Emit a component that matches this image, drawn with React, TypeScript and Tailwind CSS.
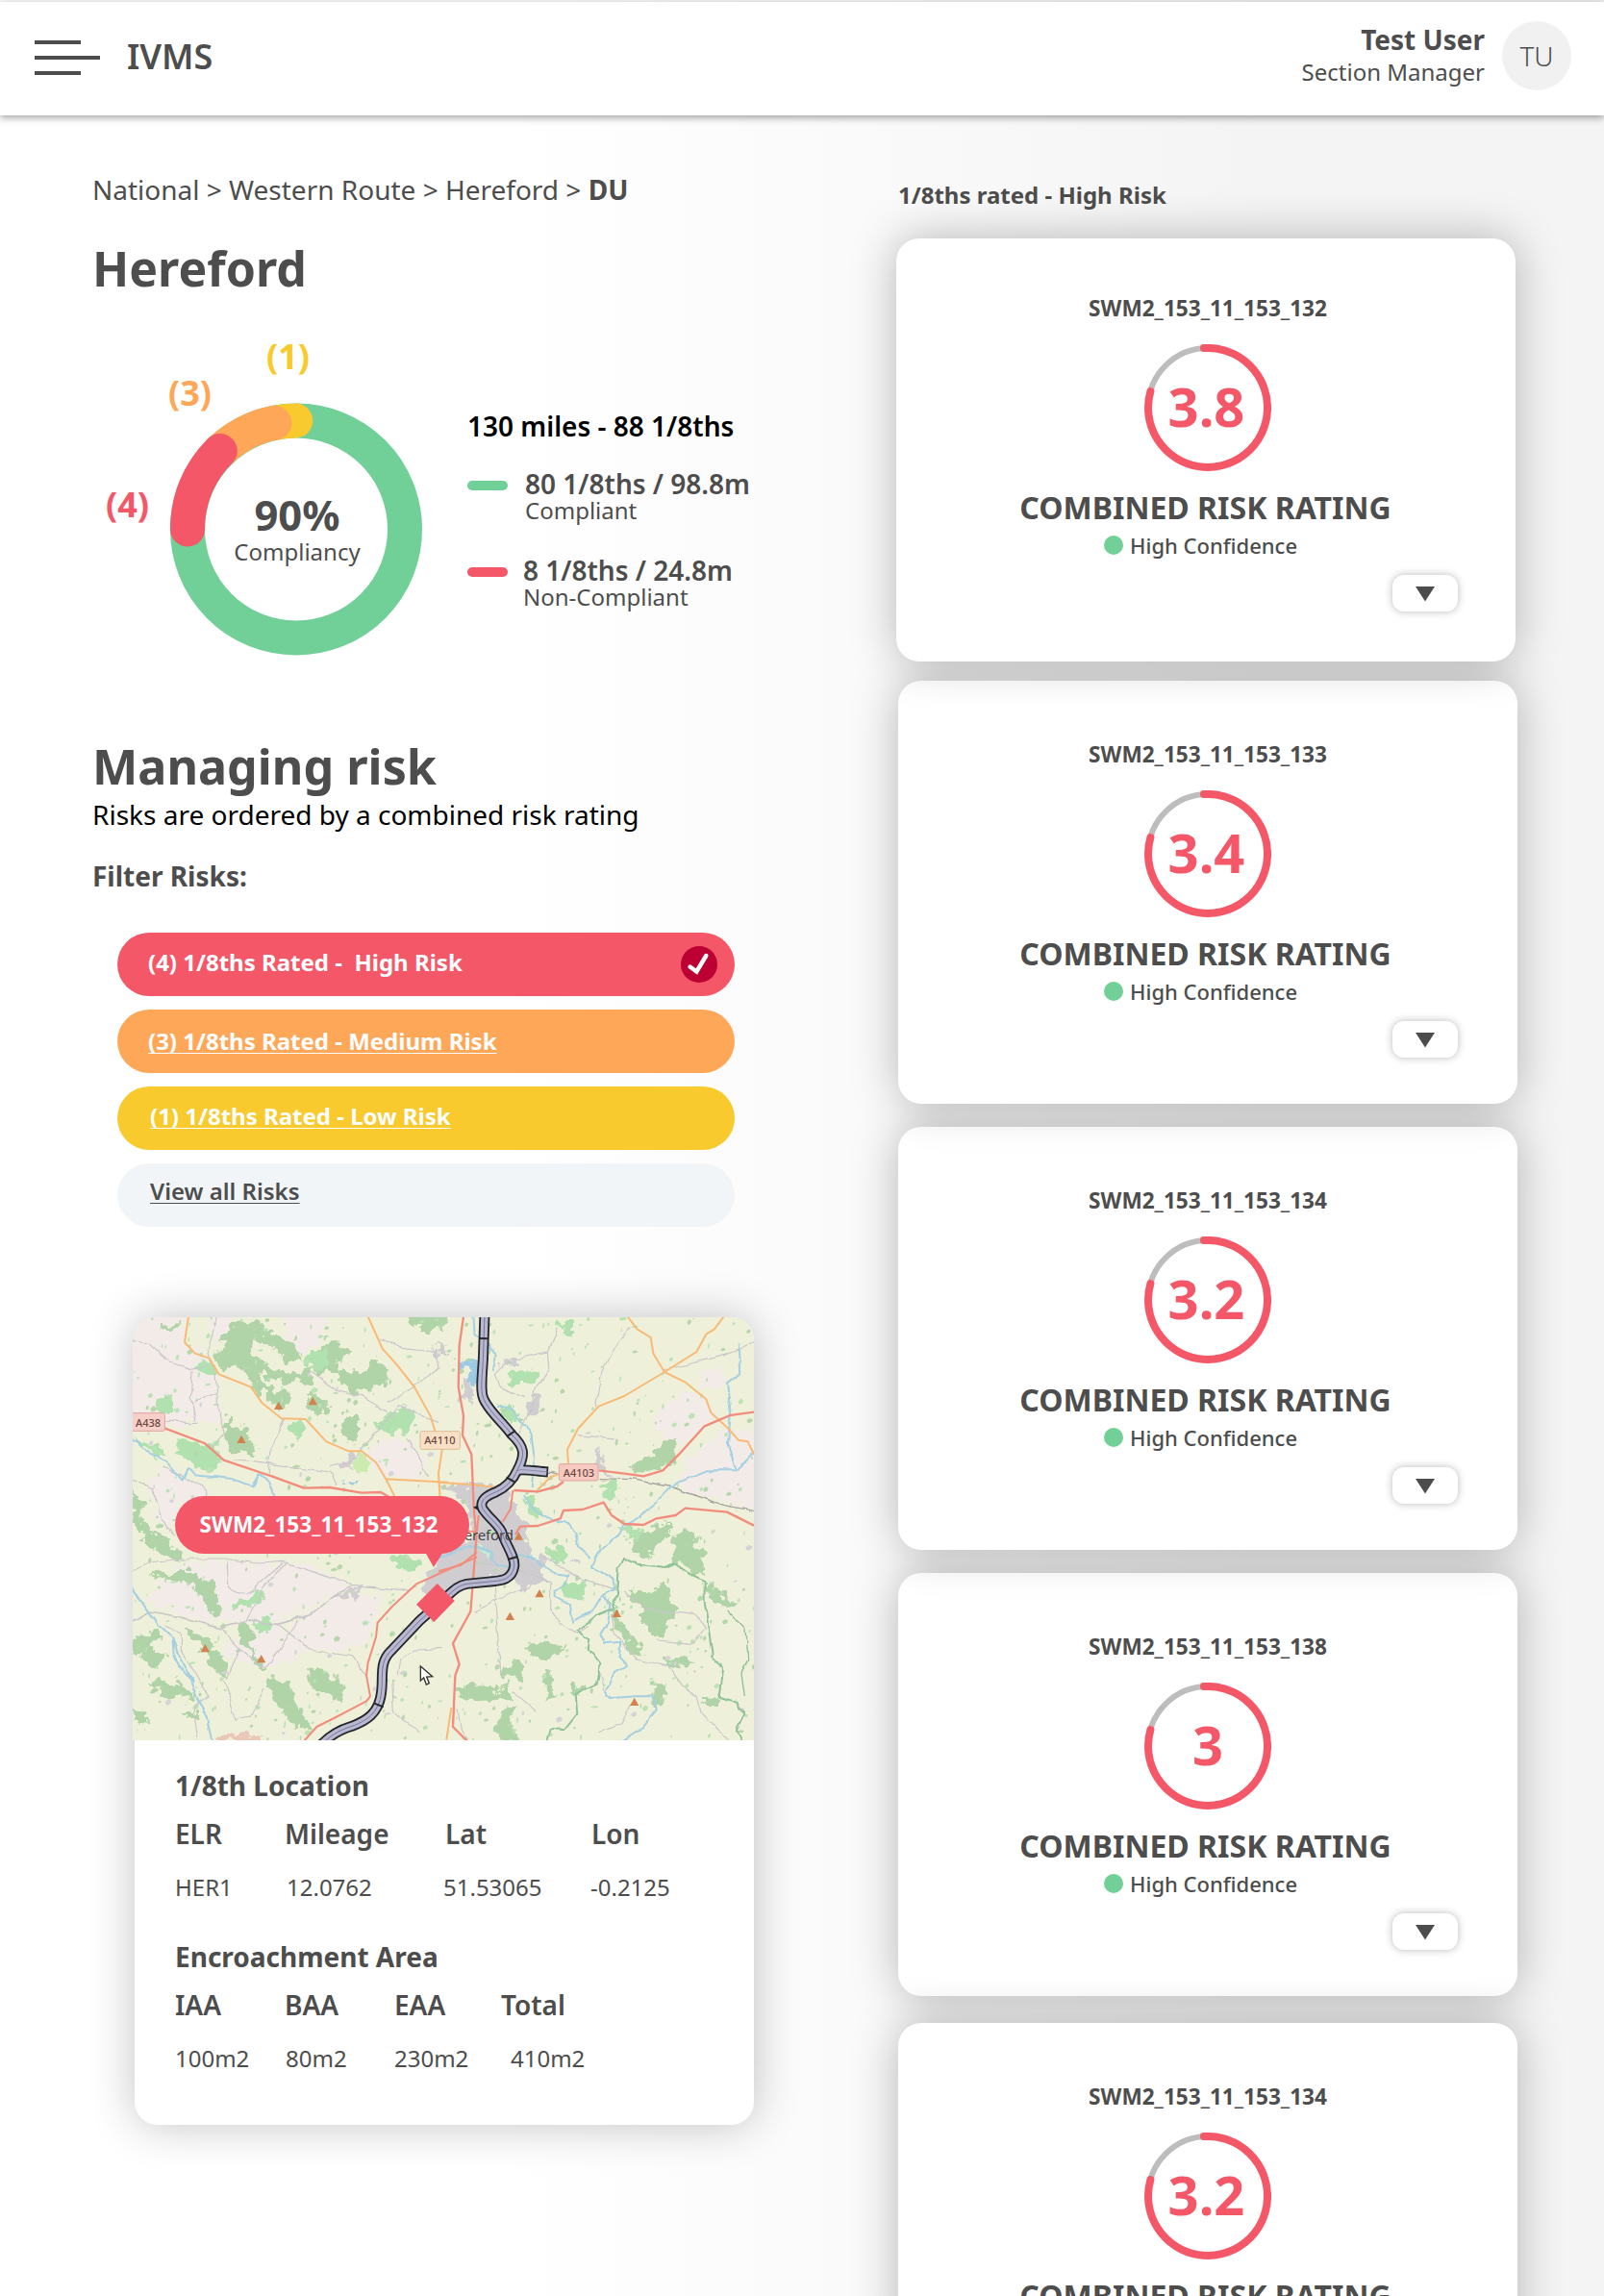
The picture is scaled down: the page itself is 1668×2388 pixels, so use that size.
import React from "react";

const RED = "#f45767";
const GREEN = "#71d097";
const ORANGE = "#ffa759";
const YELLOW = "#f8ca2e";

function Header() {
  return (
    <header className="relative z-10 mt-0.5 flex h-[118px] shrink-0 items-start bg-white shadow-[0_2px_8px_rgba(0,0,0,0.4)]">
      <div className="mt-10 ml-9 flex flex-col gap-3">
        <span className="h-1 w-12 bg-[#4d4d4d]" />
        <span className="h-1 w-[68px] bg-[#4d4d4d]" />
        <span className="h-1 w-12 bg-[#4d4d4d]" />
      </div>
      <h1 className="mt-[33px] ml-7 text-[36px] leading-[48px] font-semibold">IVMS</h1>
      <div className="ml-auto pt-[19px] text-right">
        <p className="text-[28px] leading-[40px] font-bold">Test User</p>
        <p className="-mt-[3px] text-[24px] leading-[34px]">Section Manager</p>
      </div>
      <div className="mt-5 mr-[34px] ml-[18px] flex size-[72px] items-center justify-center rounded-full bg-[#f1f1f1] text-[28px] font-light">
        TU
      </div>
    </header>
  );
}

function Donut() {
  return (
    <svg width="350" height="350" viewBox="0 0 350 350" className="shrink-0 overflow-visible">
      <g fill="none" strokeWidth="36" strokeLinecap="round">
        <circle cx="212" cy="210.5" r="113" stroke={GREEN} />
        <path d="M189.5 99.8 A113 113 0 0 1 211.3 97.5" stroke={YELLOW} />
        <path d="M132.8 129 A113 113 0 0 1 189.5 99.8" stroke={ORANGE} />
        <path d="M99 210.5 A113 113 0 0 1 132.8 129" stroke={RED} />
      </g>
      <g textAnchor="middle" fontWeight="700" fontSize="36">
        <text x="203.500" y="43.7" fill={YELLOW}>(1)</text>
        <text x="101.500" y="82" fill={ORANGE}>(3)</text>
        <text x="36.5" y="198" fill={RED}>(4)</text>
        <text x="213" y="212" fontSize="43.5" fill="#4d4d4d">90%</text>
        <text x="213" y="243" fontSize="24" fontWeight="400" fill="#4d4d4d">Compliancy</text>
      </g>
    </svg>
  );
}

function Legend() {
  return (
    <div className="ml-10 pt-[83px]">
      <p className="text-[28px] leading-[40px] font-semibold whitespace-nowrap text-black">130 miles - 88 1/8ths</p>
      <div className="mt-[25px] flex gap-[18px]">
        <span className="mt-3 h-2.5 w-[42px] rounded-full bg-[#71d097]" />
        <div>
          <p className="text-[28px] leading-[30px] font-semibold">80 1/8ths / 98.8m</p>
          <p className="text-[24px] leading-[26px]">Compliant</p>
        </div>
      </div>
      <div className="mt-[34px] flex gap-4">
        <span className="mt-3 h-2.5 w-[42px] rounded-full bg-[#f45767]" />
        <div>
          <p className="text-[28px] leading-[30px] font-semibold">8 1/8ths / 24.8m</p>
          <p className="text-[24px] leading-[26px]">Non-Compliant</p>
        </div>
      </div>
    </div>
  );
}

function Filters() {
  return (
    <div className="mt-[39px] ml-[26px] flex w-[642px] flex-col gap-3.5 text-[24px] leading-[34px] font-bold text-white">
      <div className="flex h-[66px] items-start justify-between rounded-full bg-[#f45767] pt-3.5 pr-[18px] pl-8">
        <span className="whitespace-pre">(4) 1/8ths Rated -  High Risk</span>
        <svg width="38" height="38" viewBox="0 0 38 38">
          <circle cx="19" cy="19" r="19" fill="#bd0034" />
          <path d="M9.500 21.500 L16.400 26.500 L26.300 10" fill="none" stroke="#fff" strokeWidth="4.4" strokeLinecap="round" />
        </svg>
      </div>
      <a className="flex h-[66px] items-start rounded-full bg-[#ffa759] pt-4 pl-8 underline decoration-1 underline-offset-[3px] [text-decoration-skip-ink:none]">
        (3) 1/8ths Rated - Medium Risk
      </a>
      <a className="flex h-[66px] items-start rounded-full bg-[#f8ca2e] pt-3.5 pl-[34px] underline decoration-1 underline-offset-[3px] [text-decoration-skip-ink:none]">
        (1) 1/8ths Rated - Low Risk
      </a>
      <a className="flex h-[66px] items-start rounded-full bg-[#f2f5f8] pt-3 pl-[34px] font-semibold text-[#4d4d4d] underline decoration-1 underline-offset-[3px] [text-decoration-skip-ink:none]">
        View all Risks
      </a>
    </div>
  );
}

/* Small scattered copses, generated from a fixed seed. */
function copses() {
  let s = 77;
  const rnd = () => {
    s = (s * 16807) % 2147483647;
    return s / 2147483647;
  };
  return Array.from({ length: 620 }, (_, i) => {
    const x = rnd() * 646;
    const y = rnd() * 440;
    const a = 0.8 + rnd() * rnd() * 4;
    const b = 0.8 + rnd() * 2.4;
    const fill = i % 11 === 0 ? "#d6d2d6" : i % 2 ? "#b6d7ac" : "#bbe3b5";
    return (
      <path
        key={i}
        fill={fill}
        d={`M${x} ${y} l${a} ${-b} l${a} ${b * 0.6} l${-a * 0.3} ${b} l${-a * 1.2} ${b * 0.5} z`}
      />
    );
  });
}

const RAIL =
  "M144 0 L140 120 C139 180 128 235 140 265 C158 308 200 338 228 378 C268 415 272 440 247 487 C232 522 212 542 178 558 C140 572 128 590 138 610 C162 645 193 662 200 690 C212 725 240 762 236 790 C230 828 200 834 170 836 L88 844 C58 850 46 866 10 898 L-60 960 L-150 1055 C-185 1090 -172 1130 -178 1180 C-185 1250 -228 1272 -270 1288 C-310 1300 -345 1322 -370 1350";
const BRANCH = "M244 490 C265 485 300 492 342 495";

function Peak({ x, y }: { x: number; y: number }) {
  return <path d={`M${x} ${y - 13} L${x + 14} ${y + 12} H${x - 14} Z`} fill="#d3824e" />;
}

function Map() {
  return (
    <svg width="646" height="440" viewBox="0 0 646 440" className="-ml-0.5 block rounded-t-3xl">
      <defs>
        <filter id="ragged" x="-5%" y="-5%" width="110%" height="110%">
          <feTurbulence type="fractalNoise" baseFrequency="0.09" numOctaves="3" seed="4" result="n" />
          <feDisplacementMap in="SourceGraphic" in2="n" scale="20" xChannelSelector="R" yChannelSelector="G" />
        </filter>
        <filter id="wobble" x="-5%" y="-5%" width="110%" height="110%">
          <feTurbulence type="fractalNoise" baseFrequency="0.06" numOctaves="2" seed="9" result="n" />
          <feDisplacementMap in="SourceGraphic" in2="n" scale="7" xChannelSelector="R" yChannelSelector="G" />
        </filter>
      </defs>
      <rect width="646" height="440" fill="#eff0d9" />

      {/* land cover */}
      <g filter="url(#ragged)">
        <g transform="translate(-2 -4) scale(0.33333)">
          <g fill="#f2ebe7">
            <path d="M-30 -30 H170 L168 90 L240 130 L270 190 L285 340 L200 340 L110 360 L-30 310Z" />
            <path d="M660 480 L780 400 L870 390 L930 470 L900 520 L800 510 L720 440Z" />
            <path d="M300 770 L520 780 L680 850 L600 900 L460 960 L300 970 L150 940 L40 890 L170 780Z" />
            <path d="M480 980 L640 890 L790 870 L740 1020 L640 1060 L520 1040Z" />
            <path d="M90 480 L230 540 L240 570 L140 600 L160 680 L90 660 L60 540Z" />
            <path d="M260 1060 L400 980 L440 970 L560 1060 L430 1110 L320 1080Z" />
            <path d="M240 -20 H350 L300 60 L260 110Z M460 -20 H620 L590 80 L540 130 L500 90Z" />
          </g>
          <g fill="#b0d4a8">
            <path d="M290 60 L330 30 L400 25 L450 70 L520 90 L530 150 L500 160 L440 110 L390 80 L380 120 L430 170 L480 180 L560 180 L570 230 L510 215 L450 210 L400 180 L420 230 L480 240 L495 270 L470 300 L430 270 L390 230 L350 170 L300 170 L265 150Z" />
            <path d="M590 90 L650 95 L690 120 L680 140 L640 140 L650 180 L740 180 L760 145 L800 155 L800 210 L770 235 L700 245 L670 240 L665 205 L620 180 L570 180 L560 150Z" />
            <path d="M300 335 L345 355 L375 390 L400 440 L360 445 L310 430 L300 380Z" />
            <path d="M655 315 L700 315 L715 360 L700 410 L670 395 L650 350Z" />
            <path d="M555 250 L610 270 L615 310 L585 320 L555 290Z" />
            <path d="M5 560 L30 590 L45 660 L90 695 L160 750 L160 765 L90 750 L35 715 L45 690 L8 650Z" />
            <path d="M180 810 L220 810 L265 860 L285 940 L255 960 L225 890 L190 840 L80 835 L60 810Z" />
            <path d="M5 1010 L60 1000 L90 1010 L60 1040 L100 1060 L100 1090 L60 1110 L40 1080 L5 1050Z" />
            <path d="M320 975 L365 970 L385 1010 L370 1030 L425 1110 L400 1110 L360 1040Z" />
            <path d="M425 1120 L500 1170 L530 1230 L555 1295 L515 1290 L470 1240 L440 1180Z" />
            <path d="M550 1110 L620 1120 L660 1180 L650 1210 L590 1190 L550 1150Z" />
            <path d="M50 1150 L150 1150 L210 1190 L200 1210 L130 1200 L60 1180Z" />
            <path d="M160 990 L200 990 L240 1010 L290 1090 L300 1130 L265 1110 L235 1060 L195 1020Z" />
            <path d="M80 30 L160 35 L150 50 L90 50Z M860 0 L990 0 L990 40 L930 55 L860 30Z" />
            <path d="M10 1220 L50 1250 L40 1290 L8 1270Z M160 1250 L210 1240 L220 1260 L170 1270Z" />
          </g>
          <g fill="#b2e1b0">
            <path d="M150 390 L260 410 L280 460 L250 500 L190 480 L145 430Z" />
            <path d="M85 260 L110 250 L125 290 L130 320 L90 310 L80 285Z" />
            <path d="M205 160 L250 145 L265 190 L230 200Z M500 335 L540 335 L530 390 L500 370Z" />
            <path d="M800 310 L880 300 L890 340 L820 380 L770 360 L770 340Z M820 750 L900 760 L920 790 L850 800 L820 780Z" />
            <path d="M8 390 L60 400 L110 440 L80 450 L20 410Z M540 130 L610 110 L620 160 L560 180Z" />
            <path d="M310 890 L380 880 L410 860 L420 880 L380 920 L310 905Z M380 950 L440 960 L440 990 L400 1010 L385 985Z" />
          </g>
          <path d="M690 460 L720 435 L750 465 L740 500 L690 500Z" fill="#cdebb0" />
          <path d="M655 470 L690 440 L700 460 L665 485Z M670 860 L720 860 L700 900 L660 880Z M930 800 L990 760 V880 L920 860Z M935 110 L990 100 V130Z" fill="#d0cdd0" />
          <path d="M670 520 q20 -12 45 4 q-20 16 -45 -4Z" fill="#9dcae0" />
          <path d="M265 1335 L300 1310 L420 1320 L380 1335Z" fill="#eac7b8" />
        </g>
        <g transform="translate(318 -4) scale(0.33333)">
          <g fill="#f2ebe7">
            <path d="M700 290 L770 245 L830 270 L870 320 L780 400 L720 410 L665 340Z" />
            <path d="M790 440 L900 350 L1020 390 V620 L900 590 L740 540Z" />
            <path d="M810 180 L880 165 L900 210 L840 240Z" />
          </g>
          <g fill="#b0d4a8">
            <path d="M590 480 L680 440 L700 395 L740 410 L735 460 L690 490 L600 490Z" />
            <path d="M730 700 L770 670 L810 710 L830 750 L830 820 L780 800 L730 770Z" />
            <path d="M640 860 L720 850 L740 900 L720 960 L690 1010 L650 980 L620 900 L590 880Z" />
            <path d="M545 880 L560 950 L600 990 L640 1060 L600 1060 L565 1000 L540 950Z" />
            <path d="M610 700 L720 650 L720 690 L640 760 L600 750Z" />
            <path d="M60 1170 L120 1155 L190 1180 L220 1150 L230 1200 L150 1205 L65 1200Z" />
            <path d="M210 1090 L255 1080 L258 1140 L200 1130Z M335 1120 L350 1110 L370 1200 L335 1200Z" />
            <path d="M180 1290 L215 1220 L250 1220 L220 1260 L250 1330 H190Z M270 1040 L330 1035 L400 1040 L350 1080 L275 1060Z" />
            <path d="M830 830 L850 850 L925 900 L910 920 L850 890Z M670 1165 L710 1165 L695 1230 L670 1220Z M815 1200 L880 1205 L880 1225 L820 1220Z" />
            <path d="M700 1070 L800 1080 L770 1110 L710 1090Z M410 1150 L460 1160 L440 1190 L415 1180Z" />
          </g>
          <g fill="#b2e1b0">
            <path d="M225 190 L290 175 L310 200 L270 225 L220 225Z" />
            <path d="M510 525 L560 530 L560 580 L515 580Z M390 840 L460 840 L450 895 L400 880Z M330 730 L395 730 L400 780 L340 770Z" />
            <path d="M380 30 L420 30 L420 65 L385 60Z M580 660 L640 680 L640 710 L580 700Z M260 570 L300 580 L340 640 L300 640Z M180 285 L230 290 L250 330 L210 330Z" />
          </g>
          <g fill="#d0cdd0">
            <path d="M0 540 L110 530 L210 545 L235 600 L270 650 L270 700 L320 770 L340 830 L270 860 L220 820 L120 850 L0 870 V740 L110 700 L90 600Z" />
            <path d="M290 250 L320 270 L320 310 L280 320 L270 290Z M190 145 L240 135 L240 155 L200 165Z M490 440 L510 430 L515 480 L545 510 L480 490Z M80 190 L110 200 L100 290 L75 230Z M420 770 L440 770 L440 790 L420 790Z" />
          </g>
          <path d="M70 150 L115 140 L130 200 L110 240 L100 170 L75 170Z" fill="#9dcae0" />
          <path d="M120 720 L160 725 L160 760 L130 750Z M90 640 L120 640 L110 660Z" fill="#c3efcf" />
        </g>
      </g>
      <g>{copses()}</g>

      {/* lanes, rivers and minor roads */}
      <g filter="url(#wobble)" fill="none" strokeLinejoin="round">
        <g transform="translate(-2 -4) scale(0.33333)">
          <g stroke="#c9c6ca" strokeWidth="3.5">
            <path d="M5 85 L60 95 L120 150 L190 175 L240 165 M275 0 L240 110 L265 200 L275 320 L295 370 L250 420" />
            <path d="M195 180 L190 260 L205 335 M200 275 L270 245 M110 340 L210 340" />
            <path d="M620 480 L690 460 L750 390 L830 290 L960 340 M560 180 L640 240 L720 260 L800 310 M800 280 L880 230 L960 170 L950 120 L850 110 L780 75" />
            <path d="M430 500 L435 420 L480 330 M320 455 L460 470 L620 495 L640 540 M860 390 L900 450 L930 510" />
            <path d="M5 520 L60 540 L85 600 L90 640 L140 690 M100 480 L230 540 L235 570" />
            <path d="M5 800 L50 780 L200 765 L290 765 L400 780 L470 775 L600 815 L690 850 L840 865 L890 855" />
            <path d="M5 960 L60 930 L140 945 L280 980 L370 960 L460 970 L560 940 L640 880 L690 850" strokeWidth="5" />
            <path d="M280 980 L340 1045 L420 1110 L460 1050 L520 960 M300 770 L305 855 L360 880 L470 780 M360 960 L410 860 L480 780" />
            <path d="M460 970 L560 1050 L690 1070 L730 1130 M110 975 L160 1000 L160 1060 L200 1120 L240 1190 L195 1230 L210 1330" />
            <path d="M300 1140 L340 1050 M290 1140 L330 1270 L380 1250 L420 1170 M830 1130 L840 1080 L900 1050 L970 1045 M815 1140 L820 1240 L900 1310" />
          </g>
          <g stroke="#a5d0e2" strokeWidth="6">
            <path d="M5 390 L40 425 L110 460 L160 520 L178 480 L200 505 L310 515 L380 538 L400 500 L430 530 L445 570" />
            <path d="M-10 840 L50 920 L85 970 L130 1010 L135 1080 L185 1140 L210 1210 L235 1250 L255 1345" />
            <path d="M130 1010 L145 1060 L195 1150" />
          </g>
        </g>
        <g transform="translate(318 -4) scale(0.33333)">
          <g stroke="#c9c6ca" strokeWidth="3.5">
            <path d="M370 50 L340 120 L220 145 L175 190 L190 230 L270 260 M340 120 L345 180 L300 230 L290 300 L250 380" />
            <path d="M600 40 L560 90 L510 180 L490 290 M984 90 L900 130 L750 165 L700 180 M440 380 L560 395" />
            <path d="M110 780 L260 800 L350 840 L350 920 L380 970 L430 1000 L470 970 M320 750 L440 830 L550 860 M290 850 L200 890 L110 930" />
            <path d="M175 850 L180 950 L195 1130 M540 940 L550 1000 L620 1080 L720 1105 L760 1160 L805 1190 L815 1240 L900 1330 M500 1110 L515 1180" />
            <path d="M580 870 L640 920 L800 940 L830 980 L790 1030 L680 1020 M600 1220 L570 1280 L500 1310 M60 1230 L70 1300 L90 1330 M230 1180 L300 1240" />
          </g>
          <path d="M340 495 L370 500 M500 515 L600 518 L720 540 L890 598 L1000 620" stroke="#a3a3a0" strokeWidth="4" />
          <g stroke="#a5d0e2" strokeWidth="6">
            <path d="M105 0 L110 60 L150 90 L180 130 L170 180 M180 290 L225 300 L250 330 L275 350 L290 390 L300 450 L290 540" />
            <path d="M935 95 L940 190 L900 220 L910 300 L900 400 L930 490 L840 490 L740 530 L680 590 L630 630 L575 665 L530 720 L490 760 L480 790 L545 830 L550 860 L510 880 L480 930 L420 965 L410 910 L365 885 L365 865 L400 840 L410 815" />
            <path d="M930 490 L990 430 M270 570 L290 605 L340 640 L400 650 L430 690 L440 730 L475 760 M160 760 L185 790 L240 800 M245 750 L290 760 L370 815 L410 820" />
            <path d="M515 880 L535 910 L525 970 L505 1000 L520 1030 L565 1025 L560 1070 L590 1100 L550 1120 L520 1180 L540 1200 L620 1195 L670 1195 L680 1240 L640 1290 L560 1340" />
            <path d="M0 765 L60 740 L120 725 L160 740 L165 770" strokeWidth="8" />
          </g>
          <g stroke="#8fc297" strokeWidth="6">
            <path d="M340 1340 L350 1295 L390 1300 L430 1250 L425 1190 L490 1160 L505 1095 L470 1050 L475 1020 L430 990 L490 945 L540 925 L555 880 L560 790 L575 765 L620 785 L710 795 L740 780 L790 815 L830 835 L830 900 L845 1000 L855 1070 L885 1105 L875 1200 L930 1215 L955 1250 L930 1300 L950 1340" />
            <path d="M905 930 L960 990 L965 1080 L945 1120 L955 1200" strokeWidth="4" />
          </g>
        </g>
      </g>

      {/* main roads on the west side */}
      <g transform="translate(-2 -4) scale(0.33333)">
        <g fill="none" stroke="#f9ba76" strokeWidth="6" strokeLinejoin="round">
          <path d="M180 10 L168 90 L200 125 L245 140 L275 190 L375 230 L410 280 L470 328 L545 330 L610 400 L680 430 L720 430 L765 465 L795 515 L825 575" />
          <path d="M740 10 L785 110 L830 160 L885 230 L935 320 L950 370 M972 420 L960 500 L965 580 M795 517 L990 527" />
        </g>
        <g fill="none" stroke="#f28c7c" strokeWidth="7" strokeLinejoin="round">
          <path d="M105 358 L230 405 L290 458 L400 495 L440 508 L540 545 L620 543 L720 560 L780 558 L810 575" />
          <path d="M1080 760 L1000 795 L890 845 L815 915 L770 965 L765 1010 L740 1090 L735 1130 L747 1195 L735 1210 L640 1260 L580 1290 L540 1335" strokeWidth="6" />
        </g>
        <Peak x={461} y={288} />
        <Peak x={568} y={274} />
        <Peak x={345} y={393} />
        <Peak x={232} y={1045} />
        <Peak x={407} y={1078} />
      </g>

      {/* main roads on the east side, railway, labels and marker */}
      <g transform="translate(318 -4) scale(0.33333)">
        <g fill="none" stroke="#f9ba76" strokeWidth="6" strokeLinejoin="round">
          <path d="M590 10 L620 50 L662 75 L670 125 L705 183 L770 215 L835 268 L850 310 L905 360 L935 395 L965 400 L984 440" />
          <path d="M890 10 L860 50 L835 65 L805 120 L705 183 L580 258 L500 290 L435 360 L402 425 L405 470 M0 527 L110 535 L200 545 M310 550 L350 510 L380 500" />
          <path d="M40 1230 L25 1330" />
        </g>
        <g fill="none" stroke="#f28c7c" strokeWidth="7" strokeLinejoin="round">
          <path d="M78 10 L65 100 L62 230 L78 320 L75 380 L103 440 L110 600 L118 700 L105 870 L100 930 L45 1030 L65 1095 L52 1130 L45 1290 L90 1335" />
          <path d="M500 490 L580 500 L640 508 L700 490 L750 440 L830 352 L870 335 L910 318 L984 308" />
          <path d="M235 552 L310 556 L370 540 L390 525 M240 690 L255 665 L310 663 L380 640 L390 615 L450 612 L515 590 L540 630 L580 657 L640 660 L680 640 L740 630 L770 608 L900 620 L984 662" />
          <path d="M232 552 L225 610 L200 650 M0 805 L70 785 L120 745 M70 680 L120 680 L125 630" strokeWidth="6" />
        </g>
        <g fill="none">
          <path d={RAIL} stroke="#26272b" strokeWidth="33" />
          <path d={BRANCH} stroke="#26272b" strokeWidth="33" />
          <path d="M108 605 L140 590 L140 625Z" fill="#26272b" />
          <path d={RAIL} stroke="#b9b8d2" strokeWidth="22" />
          <path d="M244 490 C265 485 300 492 337 494.500" stroke="#b9b8d2" strokeWidth="22" />
          <path d={RAIL} stroke="#77778f" strokeWidth="3" />
          <path d={BRANCH} stroke="#77778f" strokeWidth="2" />
          <path d="M129 78 L156 79 M216 382 L240 366 M212 512 L238 526 M216 768 L244 760 M-200 1217 L-172 1228" stroke="#26272b" strokeWidth="6" />
        </g>
        <text x="80" y="709" fontSize="45" textLength="154" fill="#44444a">ereford</text>
        <Peak x={250} y={695} />
        <Peak x={315} y={874} />
        <Peak x={223} y={945} />
        <Peak x={556} y={936} />
        <Peak x={611} y={1212} />

        <rect x="-960" y="311" width="106" height="56" rx="5" fill="#f6d0c8" stroke="#e0a59b" strokeWidth="3" />
        <rect x="-57" y="368" width="124" height="56" rx="5" fill="#f8e0c6" stroke="#dcbd97" strokeWidth="3" />
        <rect x="376" y="470" width="122" height="52" rx="5" fill="#f6c9c1" stroke="#e0a59b" strokeWidth="3" />
        <g fontSize="33" fill="#6a4640" textAnchor="middle">
          <text x="-906" y="353" fontWeight="500">A438</text>
          <text x="4" y="409" fontWeight="500">A4110</text>
          <text x="438" y="511" fontWeight="500">A4103</text>
        </g>
        <path d="M-56 1101 V1146 L-46 1137 L-38 1158 L-29 1154 L-37 1134 L-19 1133 Z" fill="#fff" stroke="#333" strokeWidth="4" />

        <path d="M-4 843 L50 897 L-14 963 L-69 908 Z" fill={RED} />
      </g>

      <rect x="44" y="186" width="306" height="60" rx="30" fill={RED} />
      <path d="M304 244 L313 260 L323 244 Z" fill={RED} />
      <text x="193.500" y="224" fontSize="22.6" fontWeight="700" fill="#fff" textAnchor="middle">SWM2_153_11_153_132</text>
    </svg>
  );
}

function LocationCard() {
  return (
    <section className="mt-[94px] ml-11 h-[840px] w-[644px] rounded-3xl bg-white shadow-[0_0_48px_rgba(0,0,0,0.24)]">
      <Map />
      <div className="pt-[27px] pl-[42px] text-[28px] leading-[40px] font-semibold">
        <h3 className="font-bold">1/8th Location</h3>
        <div className="mt-2.5 grid grid-cols-[114px_167px_152px_auto]">
          <span>ELR</span>
          <span>Mileage</span>
          <span>Lat</span>
          <span>Lon</span>
        </div>
        <div className="mt-[19px] grid grid-cols-[116px_163px_153px_auto] text-[24px] leading-[34px] font-normal">
          <span>HER1</span>
          <span>12.0762</span>
          <span>51.53065</span>
          <span>-0.2125</span>
        </div>
        <h3 className="mt-[35px] font-bold">Encroachment Area</h3>
        <div className="mt-2.5 grid grid-cols-[114px_114px_111px_auto]">
          <span>IAA</span>
          <span>BAA</span>
          <span>EAA</span>
          <span>Total</span>
        </div>
        <div className="mt-[19px] grid grid-cols-[115px_113px_121px_auto] text-[24px] leading-[34px] font-normal">
          <span>100m2</span>
          <span>80m2</span>
          <span>230m2</span>
          <span>410m2</span>
        </div>
      </div>
    </section>
  );
}

function RiskCard({ id, rating, className }: { id: string; rating: string; className: string }) {
  return (
    <article
      className={`relative flex h-[440px] w-[644px] shrink-0 flex-col items-center rounded-3xl bg-white shadow-[0_0_48px_rgba(0,0,0,0.27)] ${className}`}
    >
      <h3 className="text-[22.6px] leading-[30px] font-bold">{id}</h3>
      <svg width="132" height="132" viewBox="0 0 132 132" className="mt-[22px]">
        <circle cx="66" cy="66" r="62" fill="none" stroke="#bdbdbd" strokeWidth="6" />
        <path d="M62 4.100 A62 62 0 1 1 6.400 49" fill="none" stroke={RED} strokeWidth="8" strokeLinecap="round" />
        <text x={rating.length > 1 ? 64.5 : 66} y="86" fontSize="56" fontWeight="700" fill={RED} textAnchor="middle">{rating}</text>
      </svg>
      <p className="mt-4 mr-[5px] text-[32px] leading-[44px] font-bold">COMBINED RISK RATING</p>
      <p className="mt-0.5 mr-[15px] flex items-center gap-[7px] text-[22px] leading-[30px] font-medium">
        <span className="size-5 rounded-full bg-[#71d097]" />
        High Confidence
      </p>
      <button className="mt-4 ml-[452px] flex h-[38px] w-[68px] items-center justify-center rounded-xl text-[#4d4d4d] shadow-[0_0_8px_rgba(0,0,0,0.28)]">
        <svg width="20" height="16" viewBox="0 0 20 16" className="mt-px">
          <path d="M0 0 H20 L10 15.500 Z" fill="currentColor" />
        </svg>
      </button>
    </article>
  );
}

export default function App() {
  return (
    <div className="flex h-[2388px] w-[1668px] flex-col overflow-hidden bg-[linear-gradient(90deg,#ffffff_0%,#ffffff_32%,#f4f4f4_79%,#f4f4f4_100%)] font-['Noto_Sans',sans-serif] text-[#4d4d4d]">
      <Header />
      <main className="flex">
        <div className="w-[932px] shrink-0 pt-[57px] pl-24">
          <p className="text-[28px] leading-[40px]">
            National &gt; Western Route &gt; Hereford &gt; <b>DU</b>
          </p>
          <h2 className="mt-8 text-[50px] leading-[60px] font-bold">Hereford</h2>
          <div className="mt-[31px] flex">
            <Donut />
            <Legend />
          </div>
          <h2 className="mt-[77px] text-[50.2px] leading-[60px] font-bold">Managing risk</h2>
          <p className="text-[28px] leading-[40px] text-black">Risks are ordered by a combined risk rating</p>
          <h3 className="mt-6 text-[28px] leading-[40px] font-bold">Filter Risks:</h3>
          <Filters />
          <LocationCard />
        </div>
        <div className="flex flex-col pt-[66px]">
          <h3 className="pl-0.5 text-[24px] leading-[34px] font-bold">1/8ths rated - High Risk</h3>
          <RiskCard id="SWM2_153_11_153_132" rating="3.8" className="z-4 mt-7 pt-[58px] pl-1" />
          <RiskCard id="SWM2_153_11_153_133" rating="3.4" className="z-3 mt-5 ml-0.5 pt-[62px]" />
          <RiskCard id="SWM2_153_11_153_134" rating="3.2" className="z-2 mt-6 ml-0.5 pt-[62px]" />
          <RiskCard id="SWM2_153_11_153_138" rating="3" className="z-1 mt-6 ml-0.5 pt-[62px]" />
          <RiskCard id="SWM2_153_11_153_134" rating="3.2" className="z-1 mt-7 ml-0.5 pt-[62px]" />
        </div>
      </main>
    </div>
  );
}
